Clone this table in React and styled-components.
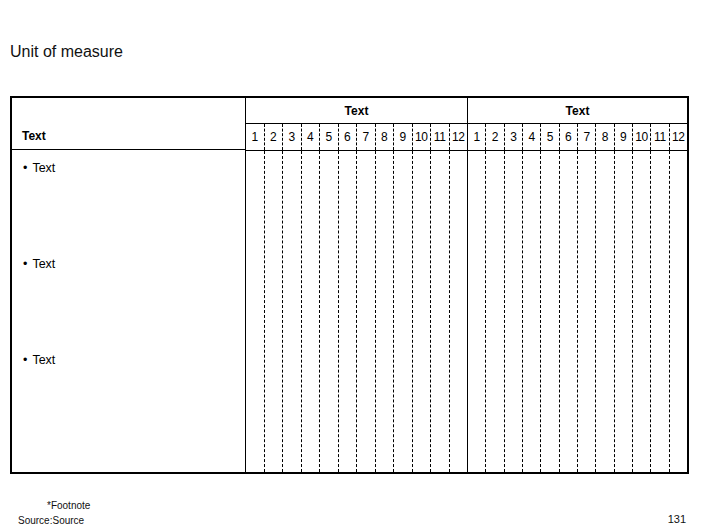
import React from 'react';
import styled, { createGlobalStyle } from 'styled-components';

const GlobalStyle = createGlobalStyle`
  body {
    margin: 0;
    background: #fff;
    font-family: "Liberation Sans", Arial, sans-serif;
    color: #000;
  }
`;

const Page = styled.div`
  width: 706px;
  height: 529px;
  padding: 0 10px;
  box-sizing: border-box;
  overflow: hidden;
`;

const Title = styled.div`
  margin-top: 42px;
  height: 20px;
  line-height: 20px;
  font-size: 16px;
  color: #111;
`;

const Table = styled.div`
  margin-top: 34px;
  width: 679px;
  height: 378px;
  box-sizing: border-box;
  border: 2px solid #000;
  display: flex;
`;

const LeftCol = styled.div`
  width: 233px;
  border-right: 1px solid #000;
  display: flex;
  flex-direction: column;
`;

const LeftHead = styled.div`
  height: 52px;
  border-bottom: 1px solid #000;
  display: flex;
  align-items: flex-end;
  padding: 0 0 6px 10px;
  box-sizing: border-box;
  font-size: 12px;
  font-weight: bold;
`;

const RowLabel = styled.div`
  height: 96px;
  padding: 11px 0 0 11px;
  box-sizing: border-box;
  font-size: 12.5px;
  line-height: 14px;
  display: flex;
  gap: 5px;
`;

const Group = styled.div`
  flex: ${p => (p.$last ? '1 1 0' : '0 0 222px')};
  box-sizing: border-box;
  display: flex;
  flex-direction: column;
  border-right: ${p => (p.$last ? 'none' : '1px solid #000')};
`;

const GroupTitle = styled.div`
  height: 25px;
  border-bottom: 1px solid #000;
  display: flex;
  align-items: center;
  justify-content: center;
  font-size: 12px;
  font-weight: bold;
`;

const NumRow = styled.div`
  height: 26px;
  border-bottom: 1px solid #000;
  display: flex;
`;

const BodyRow = styled.div`
  flex: 1;
  display: flex;
`;

const Cell = styled.div`
  flex: 1;
  min-width: 0;
  display: flex;
  align-items: center;
  justify-content: center;
  font-size: 12px;
  letter-spacing: -0.3px;
  border-left: ${p => (p.$first ? 'none' : '1px dashed #000')};
`;

const Footer = styled.div`
  display: flex;
  justify-content: space-between;
  align-items: flex-end;
  margin-top: 24px;
  width: 676px;
`;

const Notes = styled.div`
  padding-left: 8px;
  font-size: 10px;
  line-height: 15px;
  color: #111;
`;

const Footnote = styled.div`
  padding-left: 29px;
`;

const PageNum = styled.div`
  font-size: 11px;
  line-height: 15px;
  padding-bottom: 1px;
  color: #111;
`;

const months = Array.from({ length: 12 }, (_, i) => i + 1);

const TimeGroup = ({ title, last }) => (
  <Group $last={last}>
    <GroupTitle>{title}</GroupTitle>
    <NumRow>
      {months.map(m => (
        <Cell key={m} $first={m === 1}>{m}</Cell>
      ))}
    </NumRow>
    <BodyRow>
      {months.map(m => (
        <Cell key={m} $first={m === 1} />
      ))}
    </BodyRow>
  </Group>
);

export default function App() {
  return (
    <Page>
      <GlobalStyle />
      <Title>Unit of measure</Title>
      <Table>
        <LeftCol>
          <LeftHead>Text</LeftHead>
          {[0, 1, 2].map(i => (
            <RowLabel key={i}>
              <span>•</span>
              <span>Text</span>
            </RowLabel>
          ))}
        </LeftCol>
        <TimeGroup title="Text" />
        <TimeGroup title="Text" last />
      </Table>
      <Footer>
        <Notes>
          <Footnote>*Footnote</Footnote>
          <div>Source:Source</div>
        </Notes>
        <PageNum>131</PageNum>
      </Footer>
    </Page>
  );
}
